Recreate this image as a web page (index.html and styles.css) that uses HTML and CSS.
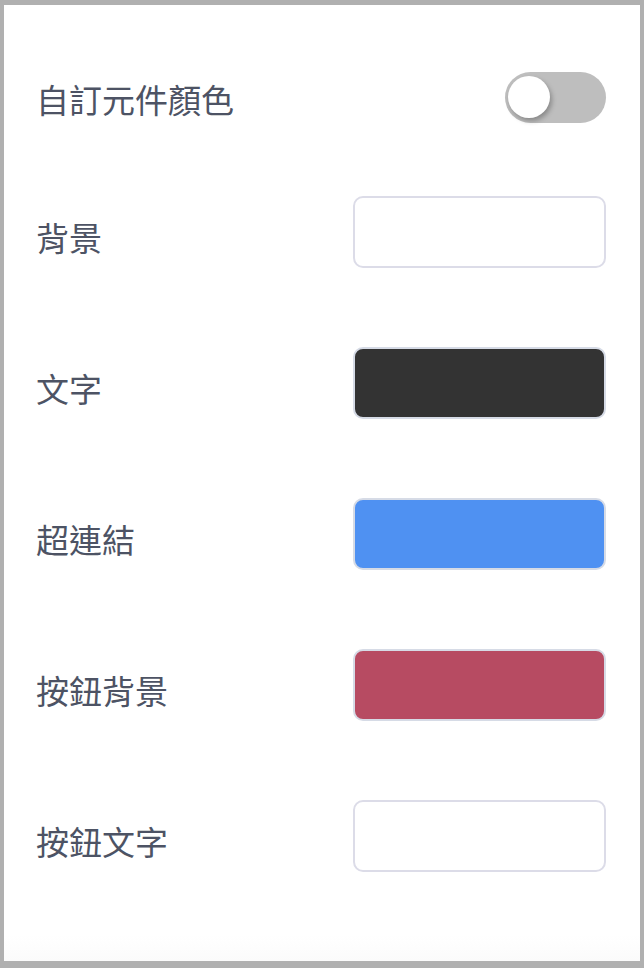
FILE: index.html
```html
<!DOCTYPE html>
<html lang="zh-Hant">
<head>
<meta charset="utf-8">
<link rel="stylesheet" href="styles.css">
</head>
<body>
<div class="frame">
  <div class="card">
    <div class="row row-head">
      <span class="label">自訂元件顏色</span>
      <div class="toggle"><div class="knob"></div></div>
    </div>
    <div class="row">
      <span class="label">背景</span>
      <div class="swatch swatch-white"></div>
    </div>
    <div class="row">
      <span class="label">文字</span>
      <div class="swatch swatch-dark"></div>
    </div>
    <div class="row">
      <span class="label">超連結</span>
      <div class="swatch swatch-blue"></div>
    </div>
    <div class="row">
      <span class="label">按鈕背景</span>
      <div class="swatch swatch-red"></div>
    </div>
    <div class="row">
      <span class="label">按鈕文字</span>
      <div class="swatch swatch-white"></div>
    </div>
  </div>
</div>
</body>
</html>
```

FILE: styles.css
```css
* { box-sizing: border-box; }
html, body { margin: 0; padding: 0; }
body {
  width: 644px;
  height: 968px;
  background: #b0b0b0;
  font-family: "Noto Sans CJK TC", "Noto Sans", sans-serif;
}
.frame {
  padding: 5px 4px 7px 4px;
  height: 968px;
}
.card {
  background: linear-gradient(to bottom, #ffffff 0, #ffffff 930px, #fbfbfb 956px);
  height: 956px;
  padding: 56px 34px 0 32px;
  display: flex;
  flex-direction: column;
  gap: 79px;
}
.row {
  height: 72px;
  display: flex;
  align-items: center;
  justify-content: space-between;
}
.row-head {
  margin-bottom: -16px;
}
.label {
  font-size: 33px;
  line-height: 40px;
  color: #4d5364;
  padding-top: 10px;
}
.row-head .label { padding-top: 4px; }
.toggle {
  position: relative;
  width: 101px;
  height: 51px;
  border-radius: 26px;
  background: #bebebe;
}
.knob {
  position: absolute;
  left: 3px;
  top: 4px;
  width: 42px;
  height: 42px;
  border-radius: 50%;
  background: #ffffff;
  box-shadow: 2px 3px 5px rgba(0, 0, 0, 0.28);
}
.swatch {
  width: 253px;
  height: 72px;
  border-radius: 10px;
  border: 2px solid #d6dbe6;
}
.swatch-white { background: #ffffff; border-color: #dcdce8; }
.swatch-dark { background: #333333; }
.swatch-blue { background: #4f91f2; }
.swatch-red { background: #b74b62; }
```
